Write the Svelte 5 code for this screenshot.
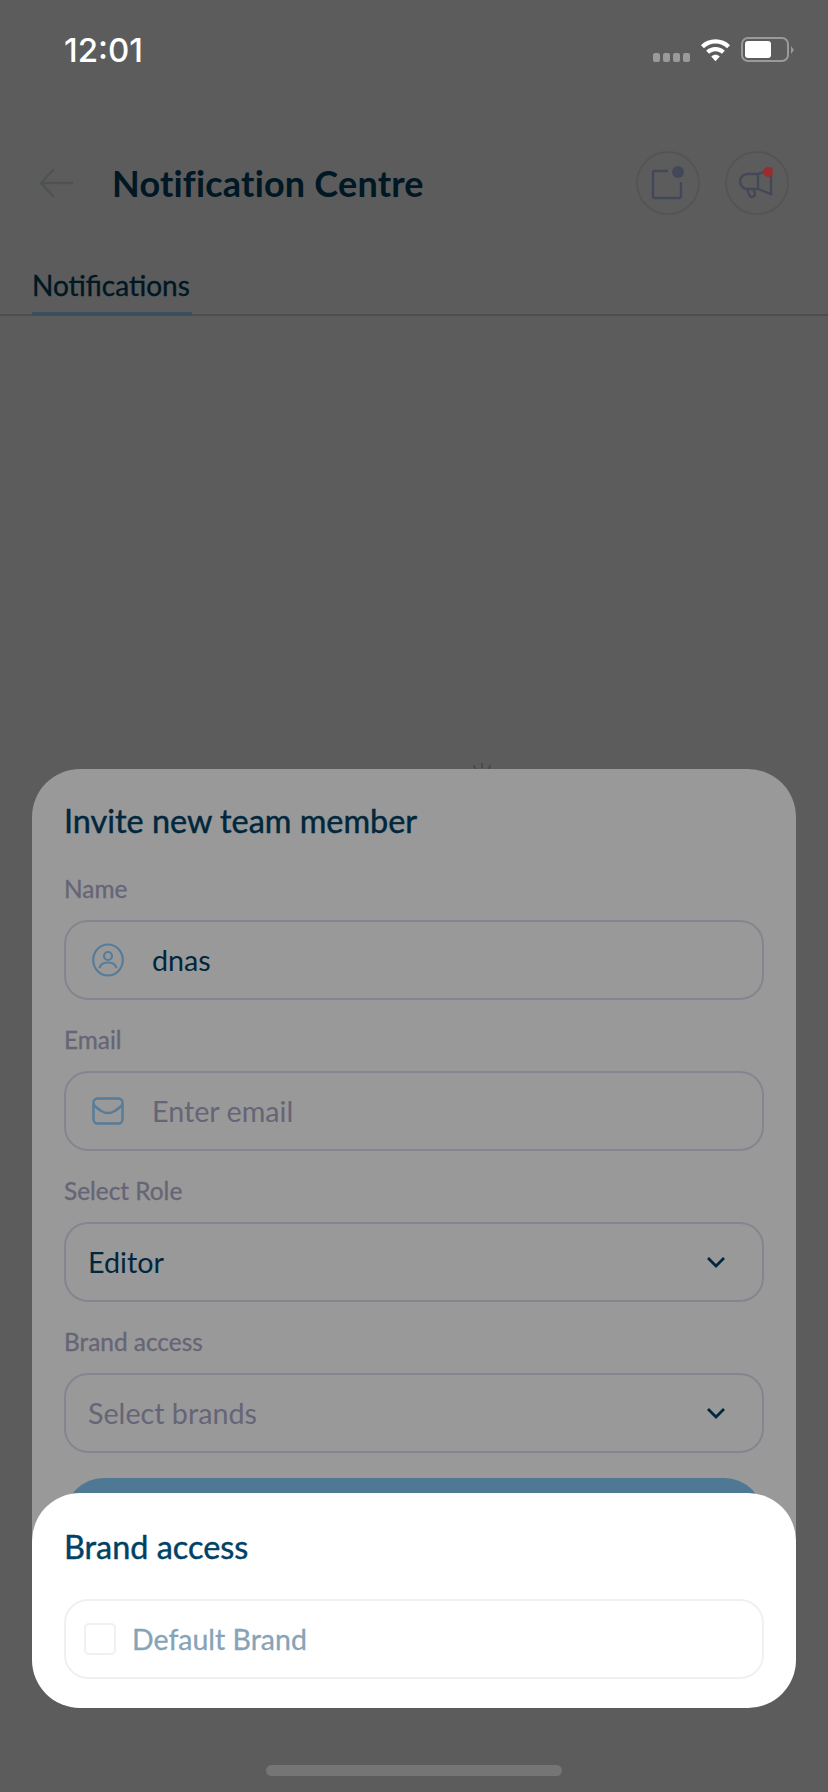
<script>
	const fields = [
		{ label: 'Name', value: 'dnas', icon: 'user' },
		{ label: 'Email', placeholder: 'Enter email', icon: 'mail' },
		{ label: 'Select Role', value: 'Editor', select: true },
		{ label: 'Brand access', placeholder: 'Select brands', select: true }
	];
	const ticks = Array.from({ length: 12 }, (_, i) => i * 30);
</script>

<div class="page">
	<div class="screen">
		<header class="top">
			<svg class="back" width="36" height="32" viewBox="0 0 36 32" fill="none" stroke="#dce4e4" stroke-width="2.4">
				<path d="M35 16H3M16 2 3 16l13 14" />
			</svg>
			<h1>Notification Centre</h1>
			<div class="actions">
				<button class="round" aria-label="Notes">
					<svg width="36" height="36" viewBox="0 0 36 36" fill="none" stroke="#bccaf5" stroke-width="2.4">
						<path d="M18 6H4.500A1.500 1.500 0 0 0 3 7.500v24A1.500 1.500 0 0 0 4.500 33h25a1.500 1.500 0 0 0 1.500-1.500V17" />
						<circle cx="28" cy="7" r="6" fill="#bccaf5" stroke="none" />
					</svg>
				</button>
				<button class="round" aria-label="Announcements">
					<svg width="40" height="40" viewBox="0 0 40 40" fill="none" stroke="#bccaf5" stroke-width="2.4">
						<path d="M21 11H10.500a7.500 7.500 0 0 0 0 15H21l13 5V6L21 11Z" />
						<path d="M21 11v15" />
						<path d="M10 26l2.500 6.500a3 3 0 0 0 5.500-2L16.500 26" />
					</svg>
				</button>
			</div>
		</header>
		<nav class="tabs"><span class="tab">Notifications</span></nav>
		<svg class="spinner" width="36" height="36" viewBox="0 0 36 36" stroke="#cfcfcf" stroke-width="2">
			{#each ticks as t}
				<line x1="18" y1="1" x2="18" y2="6" transform="rotate({t} 18 18)" />
			{/each}
		</svg>
	</div>

	<div class="scrim"></div>

	<section class="sheet invite">
		<h2>Invite new team member</h2>
		<div class="form">
			{#each fields as f}
				<div class="group">
					<span class="label">{f.label}</span>
					<div class="field" class:select={f.select}>
						{#if f.icon === 'user'}
							<svg width="32" height="34" viewBox="0 0 32 34" fill="none" stroke="#8fcfff" stroke-width="2.2">
								<ellipse cx="16" cy="17" rx="14.800" ry="15.500" />
								<circle cx="16" cy="13" r="4" />
								<path d="M7.500 25c1-4 4.500-5.500 8.500-5.500s7.500 1.500 8.500 5.500" />
							</svg>
						{:else if f.icon === 'mail'}
							<svg width="32" height="28" viewBox="0 0 32 28" fill="none" stroke="#8fcfff" stroke-width="2.400">
								<rect x="1.500" y="1.500" width="29" height="25" rx="4" />
								<path d="M1.500 8c6 5 9.500 8 14.500 8s8.500-3 14.500-8" />
							</svg>
						{/if}
						<span class={f.value ? 'value' : 'placeholder'}>{f.value ?? f.placeholder}</span>
						{#if f.select}
							<svg class="chev" width="20" height="14" viewBox="0 0 20 14" fill="none" stroke="#004266" stroke-width="2.800">
								<path d="M2 3l8 8 8-8" />
							</svg>
						{/if}
					</div>
				</div>
			{/each}
		</div>
		<button class="submit" aria-label="Send invite"></button>
	</section>

	<div class="scrim"></div>

	<section class="sheet brands">
		<h2>Brand access</h2>
		<label class="option">
			<span class="box"></span>
			<span>Default Brand</span>
		</label>
	</section>

	<span class="badge"></span>

	<div class="status">
		<span class="time">12:01</span>
		<div class="sys">
			<div class="dots"><i></i><i></i><i></i><i></i></div>
			<svg width="31" height="24" viewBox="0 0 32 24" fill="#fff">
				<path d="M16 1C10 1 5 3.200 1 7l3 3.200C7.500 7 11.500 5.300 16 5.300S24.500 7 28 10.200L31 7C27 3.200 22 1 16 1Z" />
				<path d="M16 9c-3.700 0-7 1.400-9.600 3.700l3 3.200C11.200 14.200 13.500 13.300 16 13.300s4.800.9 6.600 2.600l3-3.200C23 10.400 19.700 9 16 9Z" />
				<path d="M16 17c-1.700 0-3.200.6-4.400 1.700L16 23.500l4.400-4.800C19.200 17.600 17.700 17 16 17Z" />
			</svg>
			<div class="battery"><div class="charge"></div></div>
			<div class="nub"></div>
		</div>
	</div>
	<div class="home"></div>
</div>

<style>
	:global(body) {
		margin: 0;
		background: #5c5c5c;
	}

	.page {
		position: relative;
		width: 828px;
		height: 1792px;
		overflow: hidden;
		background: #fff;
		font-family: Lato, 'Noto Sans', sans-serif;
	}

	.screen {
		padding-top: 150px;
	}

	.top {
		display: flex;
		align-items: center;
		height: 66px;
		padding: 0 39px 0 38px;
	}

	.back {
		margin-right: 38px;
	}

	h1 {
		margin: 0;
		flex: 1;
		font-size: 36px;
		font-weight: 700;
		letter-spacing: 0.2px;
		color: #004266;
	}

	.actions {
		display: flex;
		gap: 25px;
	}

	.round {
		display: flex;
		align-items: center;
		justify-content: center;
		width: 64px;
		height: 64px;
		padding: 0;
		border: 2px solid #ececec;
		border-radius: 50%;
		background: none;
	}

	.tabs {
		margin-top: 46px;
		height: 52px;
		border-bottom: 2px solid #d8d8d8;
	}

	.tab {
		display: inline-block;
		box-sizing: border-box;
		margin-left: 32px;
		width: 160px;
		height: 54px;
		padding-top: 6px;
		border-bottom: 4px solid #a2dcff;
		font-size: 28px;
		-webkit-text-stroke: 0.35px #004266;
		color: #004266;
	}

	.spinner {
		position: absolute;
		left: 464px;
		top: 762px;
	}

	.scrim {
		position: absolute;
		inset: 0;
		background: rgba(0, 0, 0, 0.4);
	}

	.sheet {
		position: absolute;
		left: 32px;
		right: 32px;
		box-sizing: border-box;
		background: #fff;
		border-radius: 48px;
		padding: 0 32px;
	}

	.invite {
		top: 769px;
		height: 830px;
		padding-top: 33px;
	}

	h2 {
		margin: 0;
		font-size: 32.400px;
		font-weight: 400;
		line-height: 38px;
		-webkit-text-stroke: 0.45px #004266;
		color: #004266;
	}

	.form {
		display: flex;
		flex-direction: column;
		gap: 29px;
		margin-top: 38px;
	}

	.group {
		display: flex;
		flex-direction: column;
		gap: 17px;
	}

	.label {
		font-size: 24.400px;
		line-height: 28px;
		-webkit-text-stroke: 0.3px #a9a9c6;
		color: #a9a9c6;
		margin-top: -3px;
	}

	.field {
		box-sizing: border-box;
		display: flex;
		align-items: center;
		gap: 28px;
		height: 80px;
		padding: 0 26px;
		border: 2px solid #dedeee;
		border-radius: 24px;
		font-size: 28.700px;
	}

	.select {
		justify-content: space-between;
		padding: 0 36px 0 22px;
	}

	.value {
		color: #004266;
	}

	.placeholder {
		color: #a9a9c6;
	}

	.submit {
		display: block;
		width: 100%;
		height: 80px;
		margin-top: 25px;
		border: none;
		border-radius: 40px;
		background: #84c8f7;
	}

	.brands {
		top: 1493px;
		height: 215px;
		padding-top: 35px;
	}

	.option {
		box-sizing: border-box;
		display: flex;
		align-items: center;
		gap: 16px;
		height: 80px;
		margin-top: 33px;
		padding: 0 18px;
		border: 2px solid #eef0f3;
		border-radius: 24px;
		font-size: 28.500px;
		-webkit-text-stroke: 0.3px #86a3b7;
		color: #86a3b7;
	}

	.box {
		box-sizing: border-box;
		width: 32px;
		height: 32px;
		border: 2px solid #eef0f3;
		border-radius: 5px;
	}

	.badge {
		position: absolute;
		left: 763px;
		top: 167px;
		width: 10px;
		height: 10px;
		border-radius: 50%;
		background: #9c2b2e;
	}

	.status {
		position: absolute;
		top: 0;
		left: 0;
		right: 0;
		height: 98px;
	}

	.time {
		position: absolute;
		left: 64px;
		top: 30px;
		font-family: Inter, sans-serif;
		font-size: 33px;
		line-height: 40px;
		font-weight: 500;
		color: #fff;
	}

	.sys {
		position: absolute;
		left: 653px;
		top: 37px;
		display: flex;
		align-items: center;
	}

	.dots {
		display: flex;
		gap: 3px;
		margin-top: 16px;
		margin-right: 10px;
	}

	.dots i {
		width: 7px;
		height: 9px;
		border-radius: 2px;
		background: #9a9a9a;
	}

	.battery {
		box-sizing: border-box;
		width: 48px;
		height: 25px;
		margin-left: 10px;
		padding: 2px;
		border: 2px solid #9a9a9a;
		border-radius: 7px;
	}

	.charge {
		width: 26px;
		height: 17px;
		border-radius: 3px;
		background: #fff;
	}

	.nub {
		width: 0;
		height: 0;
		margin-left: 2px;
		border-top: 4px solid transparent;
		border-bottom: 4px solid transparent;
		border-left: 3px solid #9a9a9a;
	}

	.home {
		position: absolute;
		left: 266px;
		top: 1765px;
		width: 296px;
		height: 11px;
		border-radius: 6px;
		background: #757575;
	}
</style>
